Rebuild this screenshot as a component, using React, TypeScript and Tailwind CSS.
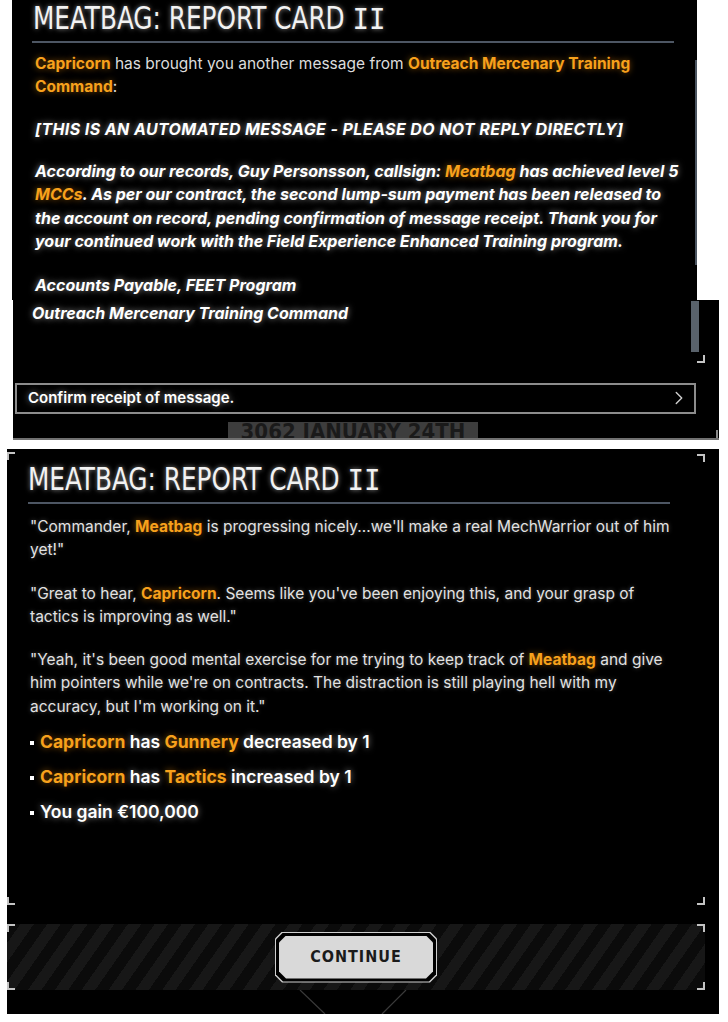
import { ChevronRight } from 'lucide-react';
import type { ReactNode } from 'react';

const glow = '[text-shadow:0_0_6px_rgba(255,255,255,0.55)]';

function O({ children }: { children: ReactNode }) {
  return (
    <span className="font-bold text-[#f7a11c] [text-shadow:0_0_6px_rgba(247,150,20,0.55)]">
      {children}
    </span>
  );
}

function Title() {
  return (
    <h1
      className={`h-[36px] origin-left scale-x-[0.86] whitespace-nowrap text-[32px] leading-[36px] text-[#f2f2f2] font-['DejaVu_Sans_Condensed','DejaVu_Sans',sans-serif] ${glow}`}
    >
      MEATBAG: REPORT CARD <span className="font-['Liberation_Mono',monospace]">II</span>
    </h1>
  );
}

function Dot() {
  return <span className="mr-[6px] inline-block h-[4px] w-[4px] translate-y-[-3px] bg-white" />;
}

function Bracket({ pos }: { pos: string }) {
  return <div className={`absolute h-[8px] w-[8px] border-[#c4c4c4] ${pos}`} />;
}

const chamfer =
  '[clip-path:polygon(7px_0,calc(100%_-_7px)_0,100%_7px,100%_calc(100%_-_7px),calc(100%_-_7px)_100%,7px_100%,0_calc(100%_-_7px),0_7px)]';

export default function App() {
  return (
    <div className="min-h-[1022px] w-[728px] bg-white font-['Inter','Open_Sans',sans-serif]">
      {/* first screen: message */}
      <div className="relative ml-[12px] h-[300px] w-[685px] overflow-hidden bg-black">
        <div className="absolute right-0 top-[60px] h-[205px] w-[2px] bg-[#4b5561]" />
        <div className="pl-[23px]">
          <div className="ml-[-2px]">
            <Title />
          </div>
          <div className="ml-[-3px] mt-[5px] h-[2px] w-[642px] bg-[#4d5663]" />
          <div className="mt-[9px] w-[650px] text-[15.5px] leading-[23px] text-[#dcdcdc]">
            <p>
              <O>Capricorn</O> has brought you another message from <O>Outreach Mercenary Training Command</O>:
            </p>
            <div className={`text-[16px] font-bold italic text-white ${glow}`}>
              <p className="mt-[20px] tracking-[0.4px]">
                [THIS IS AN AUTOMATED MESSAGE - PLEASE DO NOT REPLY DIRECTLY]
              </p>
              <p className="mt-[19px] leading-[23.4px]">
                According to our records, Guy Personsson, callsign: <O>Meatbag</O> has achieved level 5{' '}
                <O>MCCs</O>. As per our contract, the second lump-sum payment has been released to the
                account on record, pending confirmation of message receipt. Thank you for your continued
                work with the Field Experience Enhanced Training program.
              </p>
              <p className="mt-[20px]">Accounts Payable, FEET Program</p>
            </div>
          </div>
        </div>
      </div>

      <div className="relative ml-[13px] h-[140px] w-[706px] bg-black">
        <div className="absolute left-[678px] top-[1px] h-[51px] w-[8px] bg-[#59626b]" />
        <Bracket pos="left-[684px] top-[55px] border-b-2 border-r-2" />
        <div className="absolute right-[1px] top-[130px] h-[8px] w-[2px] bg-[#8a8a8a]" />
        <p className={`pl-[19px] pt-[1.5px] text-[16px] font-bold italic leading-[23px] text-white ${glow}`}>
          Outreach Mercenary Training Command
        </p>
        <div className="ml-[2px] mt-[58px] flex h-[31px] w-[681px] items-center justify-between border-2 border-[#8c8c8c] pl-[11px] pr-[4px]">
          <span className={`text-[15px] font-semibold text-white ${glow}`}>Confirm receipt of message.</span>
          <ChevronRight size={22} strokeWidth={1.5} className="text-[#cfcfcf]" />
        </div>
        <div className="ml-[215px] mt-[8px] flex h-[16px] w-[250px] justify-center overflow-hidden bg-[#3d3d3d]">
          <span className="mt-[-2px] text-[22px] font-bold leading-[24px] text-[#1a1a1a] font-['DejaVu_Sans_Condensed','Liberation_Sans_Narrow',sans-serif]">
            3062 JANUARY 24TH
          </span>
        </div>
        <div className="h-[2px] w-full bg-[#707070]" />
      </div>

      {/* second screen: event result */}
      <div className="relative ml-[7px] mt-[9px] flex h-[565px] w-[712px] flex-col bg-black">
        <Bracket pos="left-0 top-[3px] border-l-2 border-t-2" />
        <Bracket pos="left-[690px] top-[5px] border-r-2 border-t-2" />
        <Bracket pos="left-0 top-[448px] border-b-2 border-l-2" />
        <Bracket pos="left-[690px] top-[448px] border-b-2 border-r-2" />

        <div className="pl-[21px]">
          <div className="mt-[12px]">
            <Title />
          </div>
          <div className="mt-[5px] h-[2px] w-[642px] bg-[#4d5663]" />
        </div>

        <div className="mt-[10.5px] pl-[23px] pr-[40px] text-[15.5px] leading-[23px] text-[#e2e2e2] [text-shadow:0_0_4px_rgba(255,255,255,0.3)]">
          <p>
            "Commander, <O>Meatbag</O> is progressing nicely...we'll make a real MechWarrior out of him yet!"
          </p>
          <p className="mt-[21px]">
            "Great to hear, <O>Capricorn</O>. Seems like you've been enjoying this, and your grasp of tactics
            is improving as well."
          </p>
          <p className="mt-[20px] leading-[23.5px]">
            "Yeah, it's been good mental exercise for me trying to keep track of <O>Meatbag</O> and give him
            pointers while we're on contracts. The distraction is still playing hell with my accuracy, but
            I'm working on it."
          </p>
          <ul className={`mt-[6px] text-[17.5px] font-semibold leading-[35px] text-white ${glow}`}>
            <li>
              <Dot />
              <O>Capricorn</O> has <O>Gunnery</O> decreased by 1
            </li>
            <li>
              <Dot />
              <O>Capricorn</O> has <O>Tactics</O> increased by 1
            </li>
            <li>
              <Dot />
              You gain €100,000
            </li>
          </ul>
        </div>

        <div className="relative mt-auto flex h-[66px] w-[698px] items-center justify-center bg-[repeating-linear-gradient(125deg,#0b0b0b_0px,#0b0b0b_11px,#171717_11px,#171717_22px)]">
          <Bracket pos="left-0 top-0 border-l-2 border-t-2" />
          <Bracket pos="right-0 top-0 border-r-2 border-t-2" />
          <Bracket pos="bottom-0 left-0 border-b-2 border-l-2" />
          <Bracket pos="bottom-0 right-0 border-b-2 border-r-2" />
          <div className={`h-[51px] w-[162px] bg-[#cfcfcf] p-[1px] ${chamfer}`}>
            <div className={`h-full w-full bg-black p-[3px] ${chamfer}`}>
              <div className={`flex h-full w-full items-center justify-center bg-[#d9d9d9] ${chamfer}`}>
                <span className="text-[16px] font-bold tracking-[1px] text-[#1b1b1b] font-['DejaVu_Sans_Condensed','Liberation_Sans_Narrow',sans-serif]">
                  CONTINUE
                </span>
              </div>
            </div>
          </div>
        </div>
        <svg width="698" height="24" className="block">
          <line x1="293" y1="0" x2="318" y2="24" stroke="#3a3a3a" strokeWidth="1.2" />
          <line x1="399" y1="0" x2="375" y2="24" stroke="#3a3a3a" strokeWidth="1.2" />
        </svg>
      </div>
    </div>
  );
}
